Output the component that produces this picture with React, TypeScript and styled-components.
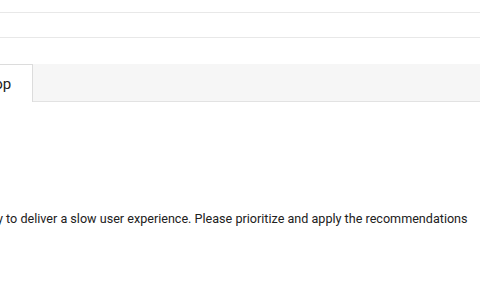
import React from 'react';
import styled, { createGlobalStyle } from 'styled-components';

const GlobalStyle = createGlobalStyle`
  html, body {
    margin: 0;
    padding: 0;
    background: #fff;
    overflow: hidden;
  }
  body {
    font-family: Roboto, 'Liberation Sans', Arial, sans-serif;
    color: #212121;
  }
`;

function App() {
  const tabs = ['Mobile', 'Desktop'];
  const active = 'Desktop';

  return (
    <Page>
      <GlobalStyle />
      <HeaderRow height={12} />
      <HeaderRow height={24} />
      <TabBar>
        <TabList>
          {tabs.map((tab) => (
            <Tab key={tab} isActive={tab === active}>
              {tab}
            </Tab>
          ))}
        </TabList>
      </TabBar>
      <Summary>
        Your page appears likely to deliver a slow user experience. Please prioritize and apply the
        recommendations below.
      </Summary>
    </Page>
  );
}

export default App;

const Page = styled.div`
  width: 480px;
  height: 300px;
  overflow: hidden;
`;

const HeaderRow = styled.div<{ height: number }>`
  height: ${({ height }) => height}px;
  border-bottom: 1px solid #e8e8e8;
`;

const TabBar = styled.div`
  margin-top: 26px;
  height: 37px;
  background: #f6f6f6;
  border-bottom: 1px solid #e2e2e2;
`;

const TabList = styled.div`
  display: flex;
  height: 100%;
  margin-left: -155px;
`;

const Tab = styled.div<{ isActive: boolean }>`
  box-sizing: border-box;
  height: 38px;
  padding: 0 21px;
  line-height: 38px;
  font-size: 15px;
  color: #212121;
  background: ${({ isActive }) => (isActive ? '#fff' : 'transparent')};
  border: 1px solid ${({ isActive }) => (isActive ? '#dcdcdc' : 'transparent')};
  border-bottom: none;
`;

const Summary = styled.p`
  margin: 107px 0 0 -133px;
  width: 624px;
  font-size: 12.6px;
  line-height: 20px;
  color: #212121;
`;
